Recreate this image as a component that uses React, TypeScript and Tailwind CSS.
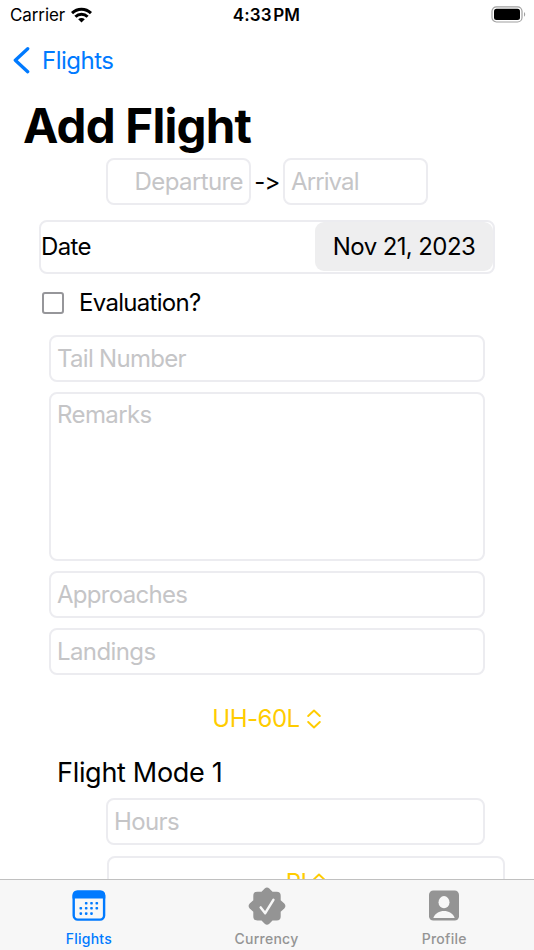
import type { ReactNode } from "react";

type FieldProps = {
  label: string;
  className?: string;
  labelClassName?: string;
};

const Field = ({ label, className = "", labelClassName = "leading-[43px]" }: FieldProps) => (
  <div
    className={`flex shrink-0 rounded-[8px] border-2 border-[#ececf0] px-[6px] text-[#c5c5c7] ${className}`}
  >
    <span className={`h-[43px] whitespace-nowrap ${labelClassName}`}>{label}</span>
  </div>
);

const ChevronUpDown = () => (
  <svg width="14" height="20" viewBox="0 0 14 20" fill="none" stroke="currentColor" strokeWidth="1.9" strokeLinecap="round" strokeLinejoin="round">
    <path d="M1.2 7 7 1.5 12.8 7M1.2 13 7 18.5 12.8 13" />
  </svg>
);

const StatusBar = () => (
  <div className="grid h-[30px] shrink-0 grid-cols-3 items-center pl-[10px] pr-[8px] text-[17px] leading-[30px]">
    <div className="flex items-center gap-[6px]">
      <span className="tracking-[-0.1px]">Carrier</span>
      <svg width="21" height="16" viewBox="0 0 21 16" fill="none" stroke="black" strokeWidth="3">
        <path d="M1 6.1C6.3.8 14.7.8 20 6.1M4.4 9.7C7.8 6.3 13.2 6.3 16.6 9.7" />
        <path d="M10.5 15.6 7.2 12.2C9 10.5 12 10.5 13.8 12.2Z" fill="black" stroke="none" />
      </svg>
    </div>
    <span className="whitespace-nowrap pr-[3px] text-center font-semibold tracking-[0.15px] [word-spacing:-3px]">4:33 PM</span>
    <div className="flex justify-end pb-[2px]">
      <svg width="35" height="17" viewBox="0 0 35 17" fill="none">
        <rect x="1" y=".8" width="30" height="15.2" rx="4.5" stroke="#a0a0a0" strokeWidth="1.2" />
        <rect x="3" y="2.8" width="26" height="11.2" rx="2.5" fill="black" />
        <path d="M33 6v4.8c1.6-.8 1.6-4 0-4.8Z" fill="#a0a0a0" />
      </svg>
    </div>
  </div>
);

const CalendarIcon = () => {
  const dots = [
    [14.2, 13.2], [19.5, 13.2], [24.8, 13.2],
    [8.8, 18.3], [14.2, 18.3], [19.5, 18.3], [24.8, 18.3],
    [8.8, 23.6], [14.2, 23.6], [19.5, 23.6],
  ];
  return (
    <svg width="34" height="32" viewBox="0 0 34 32" fill="none">
      <rect x="1.7" y="1.8" width="30.4" height="27.8" rx="4" stroke="currentColor" strokeWidth="2.4" />
      <path d="M.5 8.5V5.4C.5 2.3 2.3.6 5.4.6h23c3.1 0 4.9 1.7 4.9 4.8v3.1Z" fill="currentColor" />
      {dots.map(([x, y]) => (
        <rect key={`${x}-${y}`} x={x - 1.3} y={y - 1.3} width="2.6" height="2.6" rx=".8" fill="currentColor" />
      ))}
    </svg>
  );
};

const SealIcon = () => (
  <svg width="38" height="38" viewBox="0 0 38 38">
    <path
      d="M16.7 1.4q2.3-2 4.6 0l3.2 3.3h4.2q4 0 4 4v4.5l3.6 3.4q2.2 2.4 0 4.8l-3.6 3.3v4.7q0 4-4 4h-4.2l-3.2 3.3q-2.3 2-4.6 0l-3.2-3.3H9.3q-4 0-4-4v-4.7l-3.6-3.3q-2.2-2.4 0-4.8l3.6-3.4V8.7q0-4 4-4h4.2Z"
      fill="currentColor"
    />
    <path d="m12.7 20.4 4.5 5.8 8.2-13.4" fill="none" stroke="#f7f7f7" strokeWidth="2.5" strokeLinecap="round" strokeLinejoin="round" />
  </svg>
);

const ProfileIcon = () => (
  <svg width="32" height="32" viewBox="0 0 32 32">
    <rect x="1" y=".5" width="30" height="30" rx="4.3" fill="currentColor" />
    <ellipse cx="16" cy="12.2" rx="5.5" ry="6.1" fill="#f7f7f7" />
    <path d="M5.3 28C7.2 23.1 11.2 21 16 21s8.8 2.1 10.7 7Z" fill="#f7f7f7" />
  </svg>
);

const Tab = ({ label, icon, active }: { label: string; icon: ReactNode; active?: boolean }) => (
  <div className={`flex flex-1 flex-col items-center ${active ? "text-[#007aff]" : "text-[#949494]"}`}>
    <div className="flex h-[53px] items-center pb-px">{icon}</div>
    <span className="text-[14px] font-medium leading-[12px] tracking-[0.25px]">{label}</span>
  </div>
);

const App = () => {
  return (
    <div className="flex h-[950px] w-[534px] flex-col overflow-hidden bg-white font-['Inter','Liberation_Sans',sans-serif] text-black">
      <StatusBar />

      {/* Navigation */}
      <div className="flex h-[60px] shrink-0 items-center gap-[12px] pl-[13px] text-[24px] text-[#007aff]">
        <svg width="17" height="28" viewBox="0 0 17 28" fill="none" stroke="currentColor" strokeWidth="3.3" strokeLinecap="round" strokeLinejoin="round">
          <path d="M14.7 2.7 2.3 14.2 14.7 25.7" />
        </svg>
        <span className="pt-[2px] tracking-[-0.5px]">Flights</span>
      </div>
      <h1 className="h-[68px] shrink-0 pl-[23px] text-[47.5px] font-bold leading-[72px] tracking-[-0.8px]">Add Flight</h1>

      {/* Flight form */}
      <div className="flex min-h-0 flex-1 flex-col overflow-hidden text-[24px] tracking-[-0.6px]">
        <div className="flex shrink-0 items-center justify-center">
          <Field label="Departure" className="h-[47px] w-[145px] justify-end" />
          <span className="w-[32px] text-center">-&gt;</span>
          <Field label="Arrival" className="h-[47px] w-[145px]" labelClassName="leading-[43px] tracking-[-0.9px]" />
        </div>

        <div className="mx-[39px] mt-[15px] flex h-[54px] shrink-0 items-start justify-between rounded-[8px] border-2 border-[#ececf0]">
          <span className="leading-[49px]">Date</span>
          <span className="flex h-[49px] w-[178px] items-center justify-center rounded-[9px] bg-[#eeeeef]">
            Nov 21, 2023
          </span>
        </div>

        <div className="mt-[13px] ml-[42px] flex h-[32px] shrink-0 items-center gap-[15px]">
          <div className="h-[22px] w-[22px] rounded-[3px] border-2 border-[#96969a]" />
          <span className="tracking-[-0.7px]">Evaluation?</span>
        </div>

        <div className="mx-[49px] mt-[16px] flex shrink-0 flex-col gap-[10px]">
          <Field label="Tail Number" className="h-[47px]" labelClassName="leading-[43px] tracking-[-0.7px]" />
          <Field label="Remarks" className="h-[169px]" labelClassName="leading-[41px]" />
          <Field label="Approaches" className="h-[47px]" labelClassName="leading-[43px] tracking-[-0.7px]" />
          <Field label="Landings" className="h-[47px]" />
        </div>

        <div className="mt-[28px] flex h-[32px] shrink-0 items-center justify-center gap-[7px] pr-px text-[#ffcc00]">
          <span className="tracking-[-0.5px]">UH-60L</span>
          <ChevronUpDown />
        </div>

        <h2 className="mt-[20px] ml-[57px] h-[36px] shrink-0 text-[27px] leading-[36px] tracking-[-0.3px]">Flight Mode 1</h2>
        <Field label="Hours" className="mt-[7px] mr-[49px] ml-[106px] h-[47px]" />
        <div className="mt-[11px] mr-[29px] ml-[107px] flex h-[53px] shrink-0 items-center justify-center gap-[6px] rounded-[8px] border-2 border-[#ececf0] text-[#ffcc00]">
          <span>PI</span>
          <ChevronUpDown />
        </div>
      </div>

      {/* Tab bar */}
      <div className="flex h-[71px] shrink-0 border-t border-[#c0c0c0] bg-[#f7f7f7] pr-px">
        <Tab label="Flights" icon={<CalendarIcon />} active />
        <Tab label="Currency" icon={<SealIcon />} />
        <Tab label="Profile" icon={<ProfileIcon />} />
      </div>
    </div>
  );
};

export default App;
